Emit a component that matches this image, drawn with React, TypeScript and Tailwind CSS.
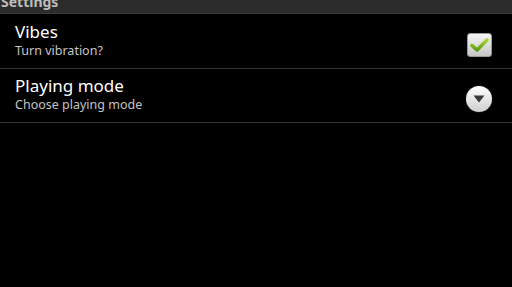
import React from 'react';

const font = { fontFamily: '"Noto Sans", "Open Sans", sans-serif' };

const CheckBox = () => (
  <div className="w-[25px] h-[24px] rounded-[3px] bg-gradient-to-b from-[#f6f6f6] to-[#c6c6c6] border border-[#9a9a9a] flex items-center justify-center">
    <svg width="19" height="16" viewBox="0 0 19 16">
      <defs>
        <linearGradient id="chk" x1="0" y1="0" x2="0" y2="1">
          <stop offset="0" stopColor="#a6d934" />
          <stop offset="1" stopColor="#5f9b12" />
        </linearGradient>
      </defs>
      <path d="M2 8.5 L7 13 L17 3" fill="none" stroke="url(#chk)" strokeWidth="3.6" strokeLinecap="round" strokeLinejoin="round" />
    </svg>
  </div>
);

const DropButton = () => (
  <div className="w-[26px] h-[26px] rounded-full bg-gradient-to-b from-[#ffffff] to-[#cfcfcf] flex items-center justify-center shadow-[0_0_1px_#888]">
    <svg width="12" height="8" viewBox="0 0 12 8" className="mt-[1px]">
      <path d="M0.5 0.5 H11.5 L6 7.5 Z" fill="#3a3a3a" />
    </svg>
  </div>
);

const PrefRow = ({ title, summary, widget, tall }: { title: string; summary: string; widget: React.ReactNode; tall?: boolean }) => (
  <div className={`flex items-start border-b border-[#333333] pl-[15px] pr-[20px] ${tall ? 'h-[55px] pt-[7px]' : 'h-[54px] pt-[6px]'}`}>
    <div className="flex-1">
      <div className="text-[17px] leading-[22px] text-white">{title}</div>
      <div className="text-[12.5px] leading-[16px] text-[#c4c4c4]">{summary}</div>
    </div>
    <div className="self-center">{widget}</div>
  </div>
);

export default function App() {
  return (
    <div className="w-[512px] h-[287px] bg-black overflow-hidden" style={font}>
      <div className="h-[14px] bg-[#2c2c2c] border-b border-[#3a3a3a] overflow-hidden pl-[1px]">
        <div className="text-[14px] leading-[14px] font-bold text-[#bcbcbc] -mt-[5px]">Settings</div>
      </div>
      <PrefRow title="Vibes" summary="Turn vibration?" widget={<CheckBox />} tall />
      <PrefRow title="Playing mode" summary="Choose playing mode" widget={<DropButton />} />
    </div>
  );
}
